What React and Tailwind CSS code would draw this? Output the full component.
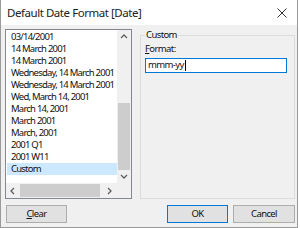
import React from 'react';

const items = [
  '03/14/2001',
  '14 March 2001',
  '14 March 2001',
  'Wednesday, 14 March 2001',
  'Wednesday, 14 March 2001',
  'Wed, March 14, 2001',
  'March 14, 2001',
  'March 2001',
  'March, 2001',
  '2001 Q1',
  '2001 W11',
  'Custom',
];

function Chevron({ dir }) {
  const d = {
    up: 'M1 5 L4 2 L7 5',
    down: 'M1 2 L4 5 L7 2',
    left: 'M5 1 L2 4 L5 7',
    right: 'M2 1 L5 4 L2 7',
  }[dir];
  return (
    <svg width="8" height="8" viewBox="0 0 8 8">
      <path d={d} fill="none" stroke="#606060" strokeWidth="1.3" />
    </svg>
  );
}

export default function App() {
  const selected = 11;
  const txt = "text-[9.5px] tracking-[-0.6px] text-[#111]";
  return (
    <div className="w-[300px] h-[228px] bg-white font-['Noto_Sans',sans-serif] text-black overflow-hidden">
      <div className="w-[298px] h-[228px] border-x border-b border-[#9a9a9a] flex flex-col">
        {/* title bar */}
        <div className="h-[25px] bg-white flex items-center justify-between pl-[6px] pr-[10px] shrink-0">
          <span className="text-[11.5px] tracking-[-0.45px] leading-none text-[#222]">Default Date Format [Date]</span>
          <svg width="10" height="10" viewBox="0 0 10 10">
            <path d="M0.5 0.5 L9.5 9.5 M9.5 0.5 L0.5 9.5" stroke="#333" strokeWidth="1" />
          </svg>
        </div>

        {/* body */}
        <div className="flex-1 bg-[#f0f0f0] pl-[4px] pr-[2px] pt-[4px] flex flex-col">
          <div className="flex gap-[8px]">
            {/* list box */}
            <div className="w-[127px] h-[170px] border border-[#828790] bg-white flex flex-col">
              <div className="flex flex-1 min-h-0">
                <div className="w-[111px] pt-[1px] pl-[1px] overflow-hidden">
                  {items.map((t, i) => (
                    <div
                      key={i}
                      className={`h-[12px] pl-[4px] leading-[12px] whitespace-nowrap text-[9.5px] tracking-[-0.78px] text-[#111] ${i === selected ? 'bg-[#cce8ff]' : ''}`}
                    >
                      {t}
                    </div>
                  ))}
                </div>
                <div className="w-[14px] bg-[#f0f0f0] flex flex-col items-center">
                  <div className="h-[14px] flex items-center justify-center"><Chevron dir="up" /></div>
                  <div className="flex-1 w-full flex flex-col pt-[59px] px-[1px]">
                    <div className="flex-1 bg-[#cdcdcd]" />
                  </div>
                  <div className="h-[13px] flex items-center justify-center"><Chevron dir="down" /></div>
                </div>
              </div>
              <div className="h-[15px] flex">
                <div className="w-[111px] bg-[#f0f0f0] flex items-center">
                  <div className="w-[14px] flex items-center justify-center"><Chevron dir="left" /></div>
                  <div className="flex-1 h-[13px] bg-[#cdcdcd] mr-[3px]" />
                  <div className="w-[14px] flex items-center justify-center"><Chevron dir="right" /></div>
                </div>
                <div className="w-[14px] bg-[#f0f0f0]" />
              </div>
            </div>

            {/* group box */}
            <div className="w-[155px] mt-[6px] h-[164px] border border-[#dcdcdc] relative pt-[6px] pl-[4px] pr-[7px]">
              <span className={`absolute -top-[7px] left-[4px] px-[1px] bg-[#f0f0f0] leading-[12px] ${txt}`}>Custom</span>
              <div className={`leading-[14px] ${txt}`}><span className="underline">F</span>ormat:</div>
              <div className={`mt-[2px] h-[15px] border border-[#0078d7] bg-white flex items-center pl-[2px] ${txt}`}>
                mmm-yy<span className="w-px h-[11px] bg-black ml-[1px]" />
              </div>
            </div>
          </div>

          {/* buttons */}
          <div className="flex mt-[6px] pl-[1px]">
            <button className={`w-[61px] h-[18px] bg-[#e1e1e1] border border-[#adadad] leading-none ${txt}`}><span className="underline">C</span>lear</button>
            <div className="flex-1" />
            <button className={`w-[61px] h-[18px] bg-[#e1e1e1] border border-[#0078d7] leading-none ${txt}`}>OK</button>
            <button className={`ml-[5px] w-[62px] h-[18px] bg-[#e1e1e1] border border-[#adadad] leading-none ${txt}`}>Cancel</button>
          </div>
        </div>
      </div>
    </div>
  );
}
